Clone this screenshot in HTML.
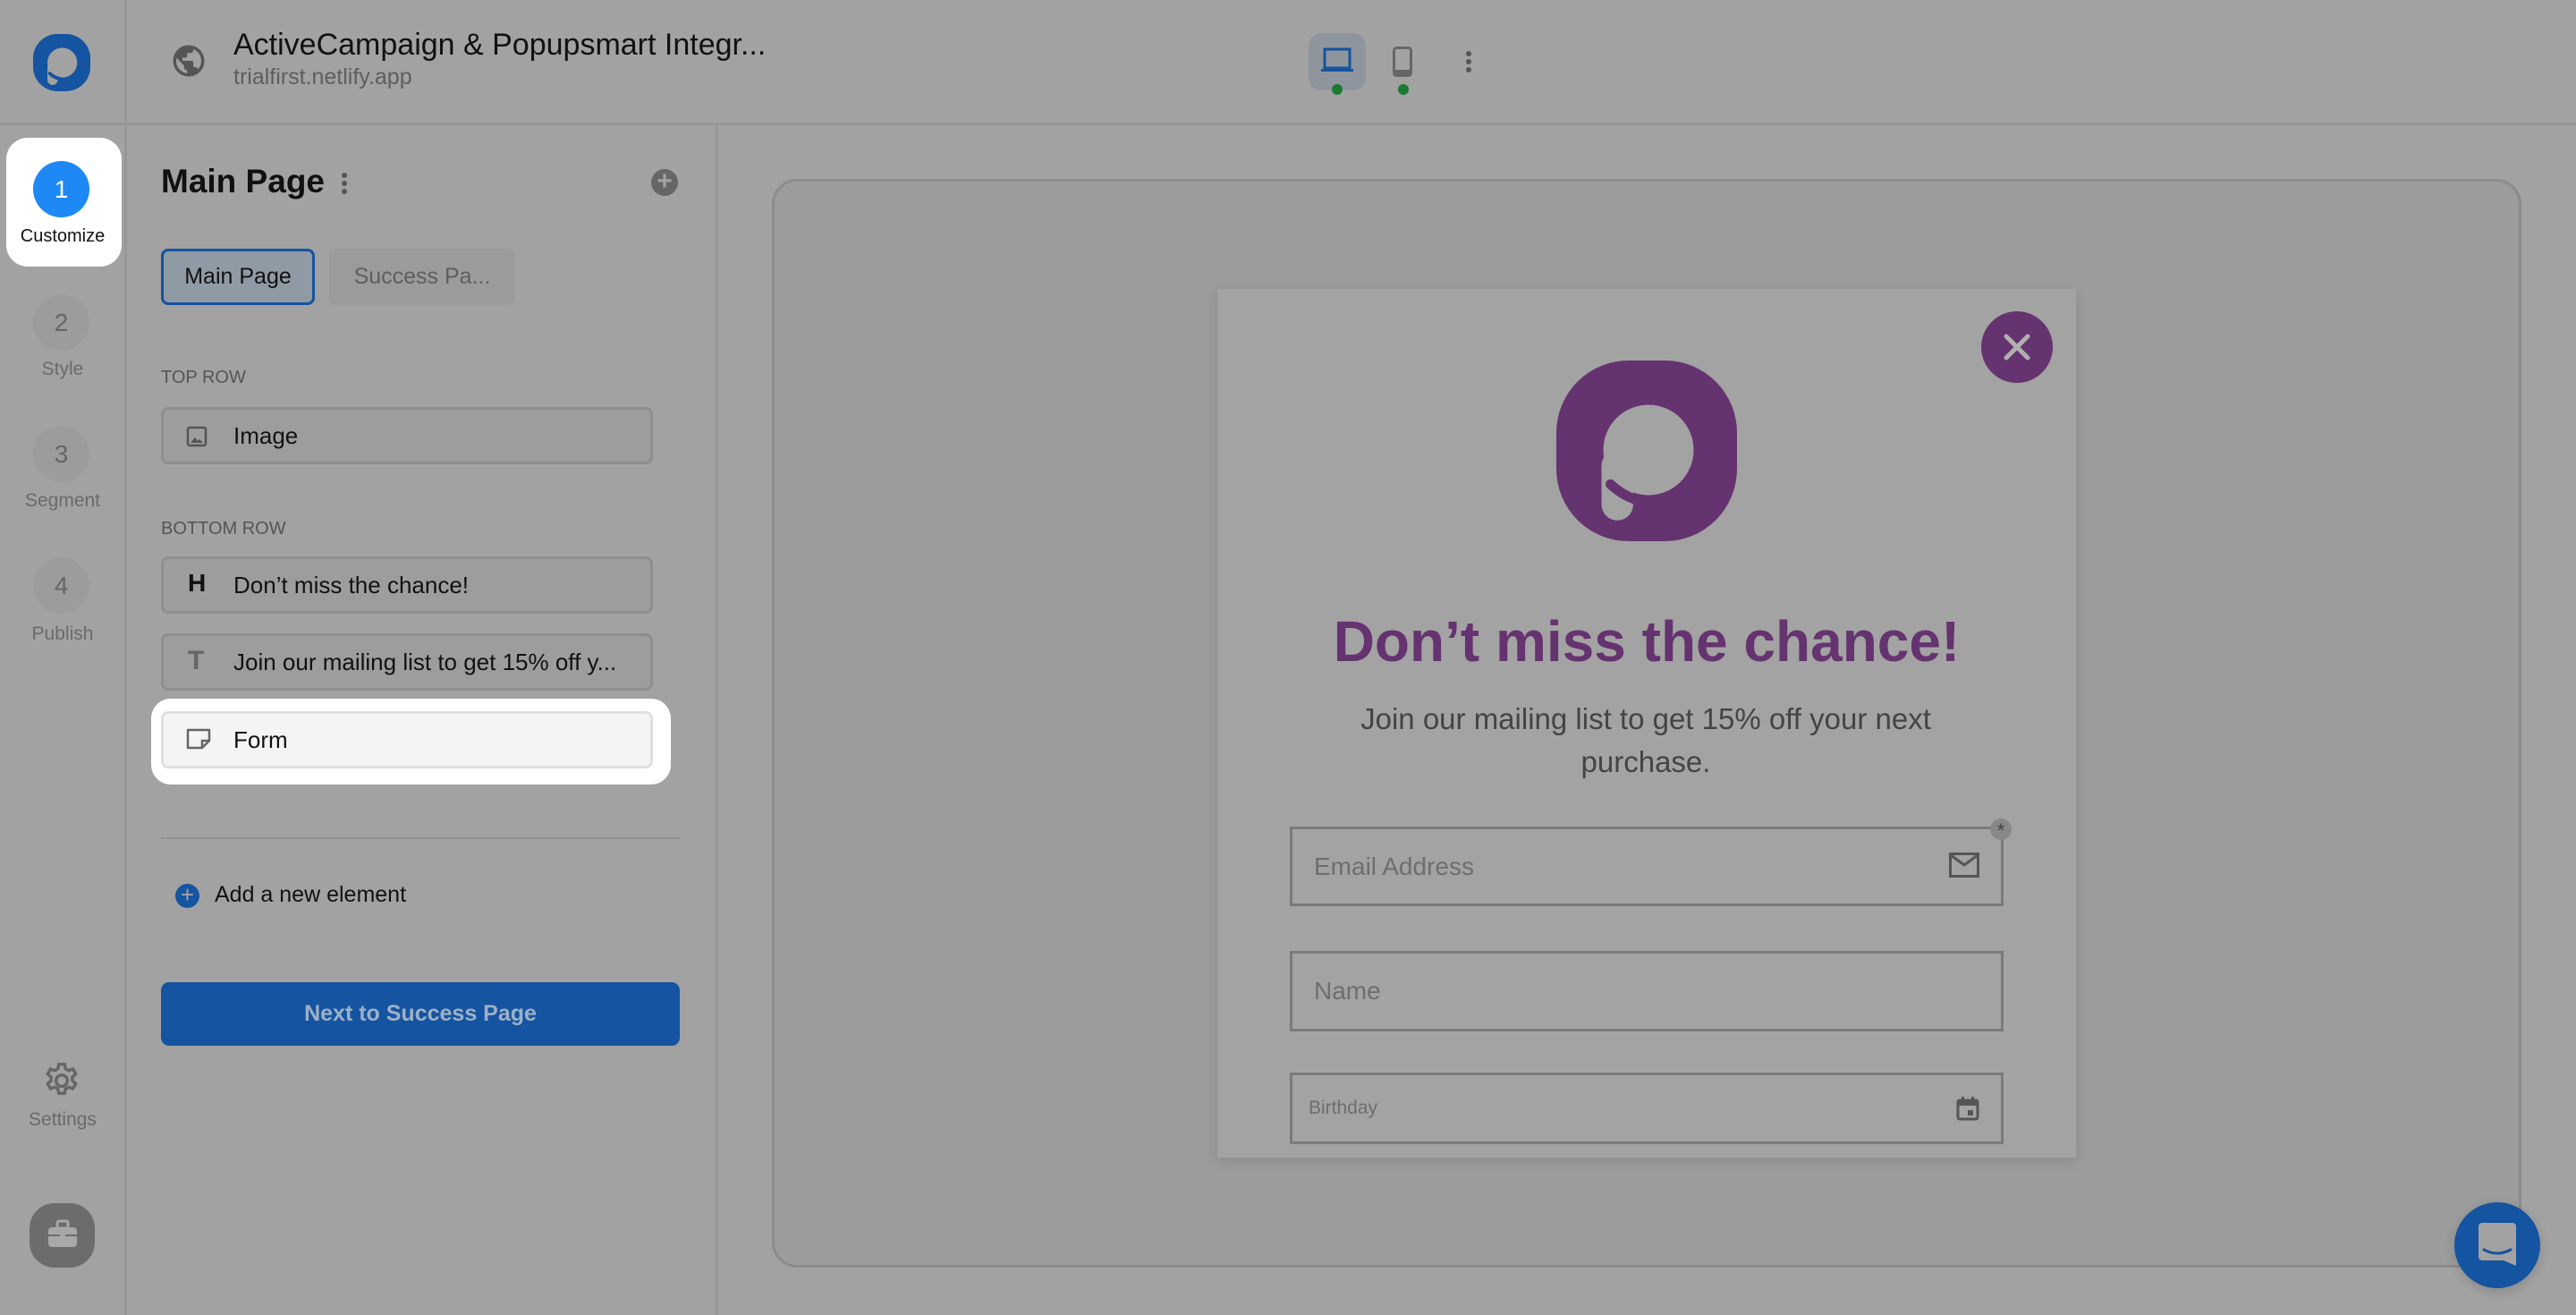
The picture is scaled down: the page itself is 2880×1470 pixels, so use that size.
<!DOCTYPE html>
<html><head><meta charset="utf-8"><style>
*{box-sizing:border-box;margin:0;padding:0}
body{width:2880px;height:1470px;overflow:hidden;background:#a2a2a2;font-family:"Liberation Sans",sans-serif;position:relative}
.a{position:absolute}
.row{position:absolute;left:180px;width:550px;height:64px;border:3px solid #8e8e8e;border-radius:8px;background:#9d9d9d;font-size:26px;color:#111;display:flex;align-items:center;padding-left:78px}
.step{position:absolute;left:37px;width:63px;height:63px;border-radius:50%;background:#9c9c9c;color:#666;font-size:28px;display:flex;align-items:center;justify-content:center}
.sl{position:absolute;left:0;width:140px;text-align:center;font-size:21px;color:#6a6a6a}
.inp{position:absolute;left:1442px;width:798px;border:3px solid #7a7a7a;font-size:28px;color:#6e6e6e;display:flex;align-items:center;padding-left:24px}
</style></head><body>
<div class="a" style="left:0;top:137px;width:2880px;height:3px;background:#979797"></div>
<div class="a" style="left:139px;top:0;width:3px;height:1470px;background:#979797"></div>
<svg class="a" style="left:37px;top:38px" width="64" height="64" viewBox="0 0 200 200"><rect x="0" y="0" width="200" height="200" rx="85" fill="#1554a0"/><circle cx="102" cy="100" r="52" fill="#a2a2a2"/><rect x="50" y="100" width="36" height="78" rx="18" fill="#a2a2a2"/><path d="M58 138 Q80 158 110 158" stroke="#1554a0" stroke-width="12" fill="none" stroke-linecap="round"/></svg>
<svg class="a" style="left:190px;top:47px" width="42" height="42" viewBox="0 0 24 24"><path fill="#555" d="M12 2C6.480 2 2 6.48 2 12s4.48 10 10 10 10-4.48 10-10S17.52 2 12 2zm-1 17.93c-3.950-.49-7-3.85-7-7.93 0-.62.08-1.21.21-1.79L9 15v1c0 1.1.9 2 2 2v1.93zm6.9-2.54c-.26-.81-1-1.39-1.9-1.39h-1v-3c0-.55-.45-1-1-1H8v-2h2c.55 0 1-.45 1-1V7h2c1.1 0 2-.9 2-2v-.41c2.93 1.19 5 4.06 5 7.41 0 2.08-.8 3.97-2.1 5.39z"/></svg>
<div class="a" style="left:261px;top:31px;font-size:34px;color:#111">ActiveCampaign &amp; Popupsmart Integr...</div>
<div class="a" style="left:261px;top:72px;font-size:25px;color:#5e5e5e">trialfirst.netlify.app</div>
<div class="a" style="left:1463px;top:37px;width:64px;height:64px;border-radius:14px;background:#8f959d"></div>
<svg class="a" style="left:1477px;top:53px" width="36" height="28" viewBox="0 0 36 28"><rect x="4" y="2" width="28" height="21" fill="none" stroke="#1554a0" stroke-width="3"/><rect x="0" y="24" width="36" height="3" fill="#1554a0"/></svg>
<div class="a" style="left:1489px;top:94px;width:12px;height:12px;border-radius:50%;background:#1a7a32"></div>
<svg class="a" style="left:1557px;top:52px" width="22" height="34" viewBox="0 0 22 34"><rect x="1.5" y="1.5" width="19" height="31" rx="3" fill="none" stroke="#666" stroke-width="3"/><rect x="1" y="26" width="20" height="7" fill="#666"/></svg>
<div class="a" style="left:1563px;top:94px;width:12px;height:12px;border-radius:50%;background:#1a7a32"></div>
<div class="a" style="left:1639px;top:57px;width:6px;height:6px;border-radius:50%;background:#555;box-shadow:0 9px 0 #555,0 18px 0 #555"></div>

<div class="a" style="left:7px;top:154px;width:129px;height:144px;border-radius:24px;background:#fff"></div>
<div class="a" style="left:37px;top:180px;width:63px;height:63px;border-radius:50%;background:#1e88f5;color:#fff;font-size:28px;display:flex;align-items:center;justify-content:center">1</div>
<div class="sl" style="top:253px;color:#111;font-size:20px">Customize</div>
<div class="step" style="top:329px">2</div><div class="sl" style="top:401px">Style</div>
<div class="step" style="top:476px">3</div><div class="sl" style="top:548px">Segment</div>
<div class="step" style="top:623px">4</div><div class="sl" style="top:697px">Publish</div>
<svg class="a" style="left:46px;top:1185px" width="46" height="46" viewBox="0 0 24 24"><path fill="none" stroke="#666" stroke-width="1.8" d="M10.3 2.5h3.4l.5 2.6 1.8 1 2.5-.9 1.7 2.9-2 1.8v2.1l2 1.8-1.7 2.9-2.5-.9-1.8 1-.5 2.6h-3.4l-.5-2.6-1.8-1-2.5.9-1.7-2.9 2-1.8V9.9l-2-1.8 1.7-2.9 2.5.9 1.8-1z"/><circle cx="12" cy="12" r="3.3" fill="none" stroke="#666" stroke-width="1.8"/></svg>
<div class="sl" style="top:1240px">Settings</div>
<div class="a" style="left:33px;top:1345px;width:73px;height:72px;border-radius:28px;background:#6c6c6c"></div>
<svg class="a" style="left:52px;top:1363px" width="36" height="34" viewBox="0 0 36 34"><rect x="12" y="2" width="12" height="8" rx="2" fill="none" stroke="#a8a8a8" stroke-width="3"/><rect x="2" y="9" width="32" height="22" rx="4" fill="#a8a8a8"/><rect x="2" y="17" width="32" height="2" fill="#6c6c6c"/><rect x="15" y="15" width="6" height="6" fill="#a8a8a8"/></svg>

<div class="a" style="left:800px;top:140px;width:3px;height:1330px;background:#979797"></div>
<div class="a" style="left:180px;top:182px;font-size:37px;font-weight:bold;color:#111">Main Page</div>
<div class="a" style="left:382px;top:193px;width:6px;height:6px;border-radius:50%;background:#555;box-shadow:0 9px 0 #555,0 18px 0 #555"></div>
<div class="a" style="left:728px;top:189px;width:30px;height:30px;border-radius:50%;background:#666;color:#a2a2a2;font-size:30px;line-height:28px;text-align:center;font-weight:bold">+</div>
<div class="a" style="left:180px;top:278px;width:172px;height:63px;border:3px solid #1554a0;border-radius:8px;background:#8f9aa5;font-size:25px;color:#111;display:flex;align-items:center;justify-content:center">Main Page</div>
<div class="a" style="left:368px;top:278px;width:208px;height:63px;border-radius:8px;background:#9b9b9b;font-size:25px;color:#5e5e5e;display:flex;align-items:center;justify-content:center">Success Pa...</div>
<div class="a" style="left:180px;top:411px;font-size:20px;color:#555">TOP ROW</div>
<div class="row" style="top:455px">Image</div>
<svg class="a" style="left:208px;top:476px" width="24" height="24" viewBox="0 0 24 24"><rect x="2" y="2" width="20" height="20" rx="2" fill="none" stroke="#555" stroke-width="2.5"/><path d="M5 19l5-6 3 4 2-2 4 4z" fill="#555"/></svg>
<div class="a" style="left:180px;top:580px;font-size:20px;color:#555">BOTTOM ROW</div>
<div class="row" style="top:622px">Don’t miss the chance!</div>
<div class="a" style="left:210px;top:636px;font-size:28px;font-weight:bold;color:#111">H</div>
<div class="row" style="top:708px">Join our mailing list to get 15% off y...</div>
<div class="a" style="left:210px;top:722px;font-size:30px;font-weight:bold;color:#666">T</div>
<div class="a" style="left:169px;top:781px;width:581px;height:96px;border-radius:22px;background:#fff"></div>
<div class="row" style="top:795px;background:#f4f4f4;border-color:#e0e0e0">Form</div>
<svg class="a" style="left:208px;top:814px" width="28" height="24" viewBox="0 0 28 24"><path d="M2 2h24v12l-8 8H2z" fill="none" stroke="#666" stroke-width="2.5" stroke-linejoin="round"/><path d="M26 14h-8v8" fill="none" stroke="#666" stroke-width="2.5"/></svg>
<div class="a" style="left:180px;top:936px;width:580px;height:2px;background:#929292"></div>
<div class="a" style="left:196px;top:988px;width:27px;height:27px;border-radius:50%;background:#1554a0;color:#a2a2a2;font-size:26px;line-height:25px;text-align:center">+</div>
<div class="a" style="left:240px;top:986px;font-size:25px;color:#111">Add a new element</div>
<div class="a" style="left:180px;top:1098px;width:580px;height:71px;border-radius:9px;background:#1554a0;color:#9cb0c8;font-size:25px;font-weight:bold;display:flex;align-items:center;justify-content:center">Next to Success Page</div>

<div class="a" style="left:863px;top:200px;width:1956px;height:1217px;border:3px solid #8c8c8c;border-radius:28px;background:#9c9c9c"></div>
<div class="a" style="left:1361px;top:323px;width:960px;height:971px;background:#a3a3a3;box-shadow:0 4px 14px rgba(0,0,0,.12)"></div>
<div class="a" style="left:2215px;top:348px;width:80px;height:80px;border-radius:50%;background:#65336f"></div>
<svg class="a" style="left:2239px;top:372px" width="32" height="32" viewBox="0 0 32 32"><path d="M4 4L28 28M28 4L4 28" stroke="#b0b0b0" stroke-width="5" stroke-linecap="round"/></svg>
<svg class="a" style="left:1740px;top:403px" width="202" height="202" viewBox="0 0 200 200"><rect x="0" y="0" width="200" height="200" rx="80" fill="#65336f"/><circle cx="102" cy="99" r="50" fill="#a3a3a3"/><rect x="50" y="99" width="35" height="78" rx="17.5" fill="#a3a3a3"/><path d="M60 137 Q78 154 104 158" stroke="#65336f" stroke-width="11" fill="none" stroke-linecap="round"/></svg>
<div class="a" style="left:1341px;top:680px;width:1000px;text-align:center;font-size:64px;font-weight:bold;color:#65336f">Don’t miss the chance!</div>
<div class="a" style="left:1450px;top:780px;width:780px;text-align:center;font-size:33px;line-height:48px;color:#444">Join our mailing list to get 15% off your next purchase.</div>
<div class="inp" style="top:924px;height:89px">Email Address</div>
<svg class="a" style="left:2179px;top:953px" width="34" height="28" viewBox="0 0 34 28"><rect x="1.5" y="1.5" width="31" height="25" fill="none" stroke="#555" stroke-width="3"/><path d="M2 3l15 11L32 3" fill="none" stroke="#555" stroke-width="3"/></svg>
<div class="a" style="left:2225px;top:915px;width:24px;height:24px;border-radius:50%;background:#888;color:#444;font-size:22px;line-height:28px;text-align:center">*</div>
<div class="inp" style="top:1063px;height:90px">Name</div>
<div class="inp" style="top:1199px;height:80px;font-size:21px;padding-left:18px">Birthday</div>
<svg class="a" style="left:2187px;top:1225px" width="26" height="28" viewBox="0 0 26 28"><rect x="2" y="5" width="22" height="21" rx="2" fill="none" stroke="#555" stroke-width="3"/><rect x="2" y="5" width="22" height="6" fill="#555"/><rect x="6" y="1" width="3" height="6" fill="#555"/><rect x="17" y="1" width="3" height="6" fill="#555"/><rect x="13" y="16" width="6" height="6" fill="#555"/></svg>

<div class="a" style="left:2744px;top:1344px;width:96px;height:96px;border-radius:50%;background:#1554a0;box-shadow:0 4px 12px rgba(0,0,0,.15)"></div>
<svg class="a" style="left:2771px;top:1367px" width="42" height="48" viewBox="0 0 42 48"><path d="M4 0h34a4 4 0 0 1 4 4v44l-14-6H4a4 4 0 0 1-4-4V4a4 4 0 0 1 4-4z" fill="#a2a2a2"/><path d="M6 30 Q21 38 36 30" fill="none" stroke="#1554a0" stroke-width="3" stroke-linecap="round"/></svg>
</body></html>
